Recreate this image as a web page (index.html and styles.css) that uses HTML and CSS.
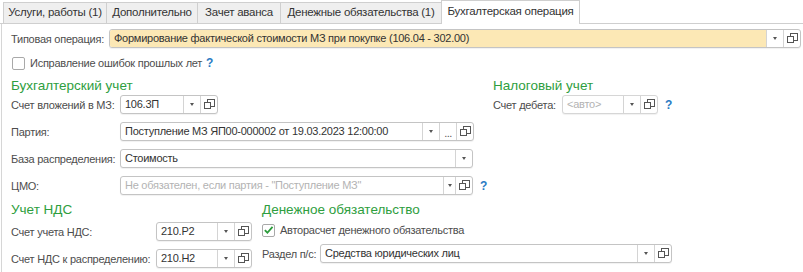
FILE: index.html
```html
<!DOCTYPE html>
<html>
<head>
  <title>Бухгалтерская операция</title>
  <meta charset="utf-8">
  <link rel="stylesheet" href="styles.css">
</head>
<body>
  <div class="tabs">
    <div class="tab t1">Услуги, работы (1)</div>
    <div class="tab t2">Дополнительно</div>
    <div class="tab t3">Зачет аванса</div>
    <div class="tab t4">Денежные обязательства (1)</div>
    <div class="tab t5 active">Бухгалтерская операция</div>
  </div>

  <div class="panel">
    <div class="row op-row">
      <span class="label w-op">Типовая операция:</span>
      <div class="field grow">
        <div class="val yellow">Формирование фактической стоимости МЗ при покупке (106.04 - 302.00)</div>
        <div class="btn drop"><i class="tri"></i></div>
        <div class="btn"><svg class="open"><use href="#open-ico"/></svg></div>
      </div>
    </div>

    <div class="row check-row">
      <span class="box"></span>
      <span class="label">Исправление ошибок прошлых лет</span>
      <span class="help">?</span>
    </div>

    <div class="cols">
      <div class="col left-top">
        <div class="heading">Бухгалтерский учет</div>

        <div class="row">
          <span class="label w-acc">Счет вложений в МЗ:</span>
          <div class="field">
            <div class="val w-62">106.3П</div>
            <div class="btn drop"><i class="tri"></i></div>
            <div class="btn"><svg class="open"><use href="#open-ico"/></svg></div>
          </div>
        </div>

        <div class="row gap">
          <span class="label w-acc">Партия:</span>
          <div class="field">
            <div class="val w-party">Поступление МЗ ЯП00-000002 от 19.03.2023 12:00:00</div>
            <div class="btn drop"><i class="tri"></i></div>
            <div class="btn dots">...</div>
            <div class="btn"><svg class="open"><use href="#open-ico"/></svg></div>
          </div>
        </div>

        <div class="row gap">
          <span class="label w-acc">База распределения:</span>
          <div class="field">
            <div class="val w-base">Стоимость</div>
            <div class="btn drop"><i class="tri"></i></div>
          </div>
        </div>

        <div class="row gap">
          <span class="label w-acc">ЦМО:</span>
          <div class="field">
            <div class="val w-cmo hint">Не обязателен, если партия - "Поступление МЗ"</div>
            <div class="btn drop narrow"><i class="tri"></i></div>
            <div class="btn"><svg class="open"><use href="#open-ico"/></svg></div>
          </div>
          <span class="help">?</span>
        </div>
      </div>

      <div class="col right-top">
        <div class="heading">Налоговый учет</div>
        <div class="row">
          <span class="label w-deb">Счет дебета:</span>
          <div class="field off">
            <div class="val w-60 hint">&lt;авто&gt;</div>
            <div class="btn drop"><i class="tri"></i></div>
            <div class="btn"><svg class="open"><use href="#open-ico"/></svg></div>
          </div>
          <span class="help">?</span>
        </div>
      </div>
    </div>

    <div class="cols">
      <div class="col left-bottom">
        <div class="heading h2">Учет НДС</div>
        <div class="row tight">
          <span class="label w-vat">Счет учета НДС:</span>
          <div class="field">
            <div class="val w-60">210.Р2</div>
            <div class="btn drop"><i class="tri"></i></div>
            <div class="btn"><svg class="open"><use href="#open-ico"/></svg></div>
          </div>
        </div>
        <div class="row gap">
          <span class="label w-vat">Счет НДС к распределению:</span>
          <div class="field">
            <div class="val w-60">210.Н2</div>
            <div class="btn drop"><i class="tri"></i></div>
            <div class="btn"><svg class="open"><use href="#open-ico"/></svg></div>
          </div>
        </div>
      </div>

      <div class="col right-bottom">
        <div class="heading h2">Денежное обязательство</div>
        <div class="row check-row2">
          <span class="box checked">
            <svg viewBox="0 0 12 12"><path d="M2 6.2 L4.8 9 L10.4 2.6" /></svg>
          </span>
          <span class="label">Авторасчет денежного обязательства</span>
        </div>
        <div class="row sect">
          <span class="label w-sect">Раздел п/с:</span>
          <div class="field">
            <div class="val w-sect-val">Средства юридических лиц</div>
            <div class="btn drop"><i class="tri"></i></div>
            <div class="btn"><svg class="open"><use href="#open-ico"/></svg></div>
          </div>
        </div>
      </div>
    </div>
  </div>

  <svg width="0" height="0" class="defs">
    <symbol id="open-ico" viewBox="0 0 11 11">
      <rect x="3.5" y="0.5" width="7" height="7" fill="none" stroke="#555"/>
      <rect x="0.5" y="3.5" width="6" height="6" fill="#fff" stroke="#555"/>
    </symbol>
  </svg>
</body>
</html>
```

FILE: styles.css
```css
* {
  box-sizing: border-box;
}

body {
  margin: 0;
  width: 803px;
  height: 272px;
  overflow: hidden;
  background: #fff;
  font-family: "Liberation Sans", Arial, sans-serif;
  font-size: 11px;
  letter-spacing: -0.25px;
  color: #333;
}

/* Tabs */
.tabs {
  display: flex;
  align-items: flex-end;
  height: 24px;
  padding-left: 3px;
  border-bottom: 1px solid #cfcfcf;
}

.tab {
  height: 21px;
  line-height: 19px;
  border: 1px solid #cfcfcf;
  border-bottom: none;
  border-right: none;
  background: #efefef;
  color: #333;
  font-size: 11.5px;
  text-align: center;
  white-space: nowrap;
}

.t1 { width: 103px; }
.t2 { width: 91px; }
.t3 { width: 83px; }
.t4 { width: 161px; }

.tab.active {
  width: 139px;
  height: 24px;
  line-height: 21px;
  background: #fff;
  border-right: 1px solid #cfcfcf;
  margin-bottom: -1px;
}

/* Panel */
.panel {
  border-left: 1px solid #d6d6d6;
  margin-left: 1px;
  height: 248px;
  padding: 5px 0 0 9px;
}

.row {
  display: flex;
  align-items: center;
  height: 19px;
}

.row.gap {
  margin-top: 8px;
}

.label {
  color: #4d4d4d;
  white-space: nowrap;
  flex-shrink: 0;
}

.w-op { width: 98px; }
.w-acc { width: 109px; }
.w-deb { width: 69px; }
.w-vat { width: 145px; }
.w-sect { width: 58px; }

/* Input fields */
.field {
  display: flex;
  height: 19px;
  border: 1px solid #c4c4c4;
  border-radius: 3px;
  background: #fff;
  box-shadow: 0 1px 1px rgba(0, 0, 0, 0.06);
  flex-shrink: 0;
}

.field.grow {
  width: 692px;
}

.field.grow .val {
  flex: 1;
}

.val {
  padding: 0 4px;
  line-height: 17px;
  white-space: nowrap;
  overflow: hidden;
  color: #333;
  border-radius: 2px 0 0 2px;
}

.val.yellow {
  background: #fce8b5;
}

.val.hint {
  color: #b3b3b3;
}

.field.off {
  border-color: #d6d6d6;
}

.w-60 { width: 60px; }
.w-62 { width: 62px; }
.w-party { width: 301px; }
.w-base { width: 334px; }
.w-cmo { width: 322px; }
.w-sect-val { width: 316px; }

.btn {
  width: 17px;
  border-left: 1px solid #d4d4d4;
  display: flex;
  align-items: center;
  justify-content: center;
  color: #555;
}

.btn.narrow {
  width: 12px;
}

.btn.dots {
  font-size: 11px;
  line-height: 10px;
  letter-spacing: -0.5px;
  padding-top: 2px;
}

.tri {
  width: 0;
  height: 0;
  border-left: 2.5px solid transparent;
  border-right: 2.5px solid transparent;
  border-top: 3px solid #555;
}

.open {
  width: 11px;
  height: 11px;
}

.help {
  color: #2b7bc4;
  font-weight: bold;
  margin-left: 7px;
  font-size: 12px;
}

/* Checkboxes */
.check-row {
  margin-top: 6px;
  margin-left: 1px;
  height: 18px;
}

.box {
  width: 13px;
  height: 13px;
  border: 1px solid #a9a9a9;
  border-radius: 2px;
  background: #fff;
  margin-right: 5px;
  flex-shrink: 0;
  display: flex;
}

.box svg {
  width: 12px;
  height: 12px;
  margin: -1px 0 0 0;
}

.box path {
  fill: none;
  stroke: #2c9c3c;
  stroke-width: 2;
}

.check-row .help {
  margin-left: 4px;
}

/* Column groups */
.cols {
  display: flex;
}

.col {
  display: flex;
  flex-direction: column;
}

.left-top { width: 482px; }
.left-bottom { width: 251px; }

.heading {
  color: #2e9e3e;
  font-size: 13.5px;
  letter-spacing: 0;
  height: 18px;
  line-height: 18px;
  margin-top: 5px;
}

.heading.h2 {
  margin-top: 6px;
}

.row.tight {
  margin-top: 3px;
}

.check-row2 {
  height: 18px;
  margin-top: 2px;
}

.row.sect {
  margin-top: 5px;
}

.defs {
  position: absolute;
}
```
